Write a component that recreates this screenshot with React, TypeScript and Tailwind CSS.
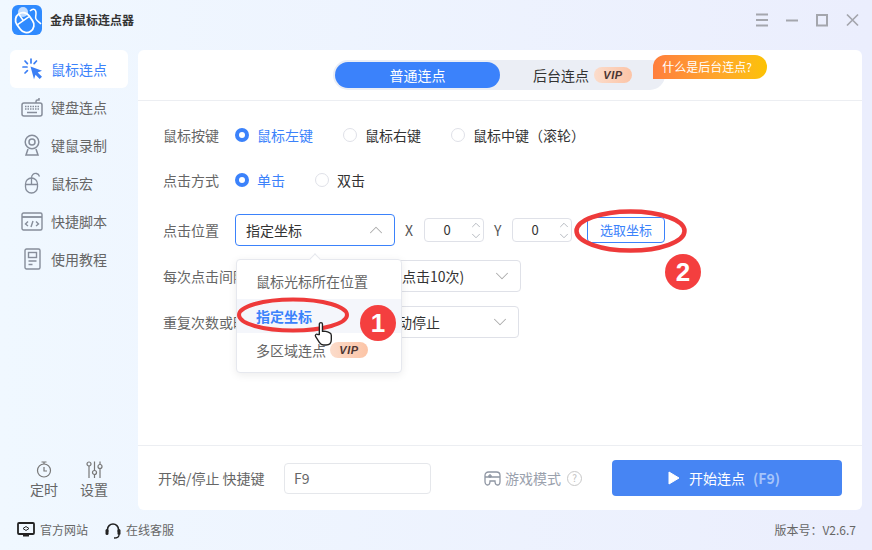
import { ChevronDown, ChevronUp } from "lucide-react";

const font = { fontFamily: '"Noto Sans CJK SC", "Noto Sans", sans-serif' };

const Logo = () => (
  <svg width="30" height="30" viewBox="0 0 30 30" fill="none">
    <defs>
      <linearGradient id="lg" x1="0" y1="0" x2="30" y2="30">
        <stop offset="0" stopColor="#2f8bff" />
        <stop offset="1" stopColor="#2f6ff0" />
      </linearGradient>
    </defs>
    <rect width="30" height="30" rx="6" fill="url(#lg)" />
    <g transform="rotate(-35 13 18)">
      <rect x="5.500" y="7" width="15" height="21" rx="7.500" stroke="#fff" strokeWidth="1.800" />
      <path d="M6 15h14M13 7v8" stroke="#fff" strokeWidth="1.500" />
    </g>
    <path d="M18 6c3-3 6-2 6 2s-1 4 0 6 3 3 5 5" stroke="#fff" strokeWidth="1.500" />
    <circle cx="11" cy="7" r="5" fill="#fff" opacity="0.7" />
  </svg>
);

const ClickIcon = () => (
  <svg width="22" height="22" viewBox="0 0 22 22" fill="none">
    <path d="M9.500 8.500l11.500 4.300-4.300 1.800 4.300 4.200-2.300 2.300-4.200-4.300-1.500 4.500z" fill="#3b7ff5" />
    <path d="M10 1v4M2 9h4M4 3l2.400 2.600M15.500 3l-2.400 2.600M4 15l2.400-2.400" stroke="#3b7ff5" strokeWidth="1.700" strokeLinecap="round" />
  </svg>
);

const KeyboardIcon = () => (
  <svg width="22" height="20" viewBox="0 0 22 20" fill="none" stroke="#868d9a" strokeWidth="1.500">
    <rect x="1" y="6" width="20" height="13" rx="2" />
    <path d="M15 6V4.500c0-1 .5-1.500 1.500-1.500H18V1" />
    <path d="M4 9.500h14M4 12h14" strokeDasharray="1.500 1" />
    <path d="M6 15.500h10" />
  </svg>
);

const CameraIcon = () => (
  <svg width="18" height="22" viewBox="0 0 18 22" fill="none" stroke="#868d9a" strokeWidth="1.500">
    <circle cx="9" cy="8" r="6.800" />
    <circle cx="9" cy="8" r="3" />
    <path d="M5 15l-2 6h12l-2-6" />
  </svg>
);

const MouseIcon = () => (
  <svg width="17" height="22" viewBox="0 0 17 22" fill="none" stroke="#868d9a" strokeWidth="1.300">
    <rect x="1.500" y="6" width="12" height="15" rx="6" />
    <path d="M1.500 12.500h12M7.500 6v6.500M7.500 6c0-3 2-5 5-4.500 1.500.3 2.500 1.500 3 3" />
  </svg>
);

const ScriptIcon = () => (
  <svg width="22" height="19" viewBox="0 0 22 19" fill="none" stroke="#868d9a" strokeWidth="1.400">
    <rect x="1" y="1" width="20" height="17" rx="1.500" />
    <path d="M1 5h20" strokeWidth="1.800" />
    <path d="M7 9.500l-2.500 2.500L7 14M15 9.500l2.500 2.500L15 14M12 9l-2 6" />
  </svg>
);

const BookIcon = () => (
  <svg width="17" height="22" viewBox="0 0 17 22" fill="none" stroke="#868d9a" strokeWidth="1.400">
    <rect x="1" y="1" width="15" height="20" rx="1.500" />
    <rect x="4.500" y="4.500" width="8" height="5" />
    <path d="M4.500 13h8M4.500 16.500h4" />
  </svg>
);

const TimerIcon = () => (
  <svg width="16" height="17" viewBox="0 0 16 17" fill="none" stroke="#777" strokeWidth="1.200">
    <circle cx="8" cy="9.500" r="6.500" />
    <path d="M5.500 1h5M8 1v2M8 6v4h3" />
  </svg>
);

const SlidersIcon = () => (
  <svg width="17" height="17" viewBox="0 0 17 17" fill="none" stroke="#777" strokeWidth="1.200">
    <path d="M3 5v12M8.500 0.500v9M8.500 13.500V17M14 0.500V3.500M14 7.500V17" />
    <circle cx="3" cy="3" r="2" />
    <circle cx="8.500" cy="11.500" r="2" />
    <circle cx="14" cy="5.500" r="2" />
  </svg>
);

const MonitorIcon = () => (
  <svg width="18" height="16" viewBox="0 0 18 16" fill="none">
    <rect x="1" y="1" width="16" height="11" rx="1" stroke="#222" strokeWidth="1.800" />
    <path d="M6 13.500h6" stroke="#222" strokeWidth="2" />
    <path d="M6 6.500l3-2 3 2-3 2z" stroke="#222" strokeWidth="1" />
  </svg>
);

const HeadsetIcon = () => (
  <svg width="16" height="17" viewBox="0 0 16 17" fill="none">
    <path d="M2.500 10V7.500a5.500 5.500 0 0 1 11 0V10" stroke="#222" strokeWidth="1.600" />
    <rect x="0.500" y="7" width="3" height="6" rx="1.500" fill="#222" />
    <rect x="12.500" y="7" width="3" height="6" rx="1.500" fill="#222" />
    <path d="M14 13c0 2-2 3-5 3" stroke="#222" strokeWidth="1.300" />
  </svg>
);

const GamepadIcon = () => (
  <svg width="17" height="15" viewBox="0 0 17 15" fill="none" stroke="#8f96a3" strokeWidth="1.300">
    <path d="M4.500 1h8c2 0 3.500 1.500 3.500 3.500v6c0 2-1 3.500-2.500 3.500S11 12.500 11 10H6c0 2.500-1 4-2.500 4S1 12.500 1 10.500v-6C1 2.500 2.500 1 4.500 1z" />
    <path d="M1 6h15M6 3v4M4.200 5h3.600" />
  </svg>
);

const WindowButtons = () => (
  <svg width="104" height="14" viewBox="0 0 104 14" fill="none" stroke="#a4a6ad" strokeWidth="2">
    <path d="M0 1.500h12M0 7h12M0 12.500h12" />
    <path d="M30 7.500h12" />
    <rect x="61" y="2" width="10" height="10.500" />
    <path d="M91 1.500l11 11M102 1.500l-11 11" strokeWidth="1.700" />
  </svg>
);

const Vip = () => (
  <span className="inline-flex h-4 w-[38px] items-center justify-center rounded-full bg-gradient-to-r from-[#fbdccb] to-[#fcc4a6] text-[11px] font-black italic leading-none tracking-wider text-[#4a3432]" style={{ fontFamily: '"Liberation Sans", sans-serif' }}>
    VIP
  </span>
);

const Radio = ({ on, label }: { on?: boolean; label: string }) => (
  <div className="flex items-center gap-2">
    {on ? (
      <span className="flex h-[14px] w-[14px] items-center justify-center rounded-full bg-[#3b82fb]">
        <span className="h-[6px] w-[6px] rounded-full bg-white" />
      </span>
    ) : (
      <span className="h-[14px] w-[14px] rounded-full border border-[#dfe1e8] bg-white" />
    )}
    <span className={on ? "text-[#3b82fb]" : "text-[#333]"}>{label}</span>
  </div>
);

const NumberBox = () => (
  <div className="flex h-6 w-[60px] items-center rounded border border-[#dfe1e8]">
    <span className="flex-1 text-center text-[13px] text-[#333]">0</span>
    <div className="flex flex-col text-[#9a9fa8]">
      <ChevronUp size={14} strokeWidth={1.200} />
      <ChevronDown size={14} strokeWidth={1.200} className="-mt-[3px]" />
    </div>
  </div>
);

const nav = [
  { label: "鼠标连点", icon: <ClickIcon />, active: true },
  { label: "键盘连点", icon: <KeyboardIcon /> },
  { label: "键鼠录制", icon: <CameraIcon /> },
  { label: "鼠标宏", icon: <MouseIcon /> },
  { label: "快捷脚本", icon: <ScriptIcon /> },
  { label: "使用教程", icon: <BookIcon /> },
];

export default function App() {
  return (
    <div className="flex h-[550px] w-[872px] flex-col overflow-hidden bg-gradient-to-r from-[#f0f8ff] to-[#ebeefd] text-sm text-[#666]" style={font}>
      <header className="flex h-[50px] shrink-0 pb-[10px]">
        <div className="flex items-center pl-3">
          <Logo />
          <span className="ml-2 text-xs font-bold text-[#333]">金舟鼠标连点器</span>
        </div>
        <div className="ml-auto flex items-center pr-3">
          <WindowButtons />
        </div>
      </header>

      <div className="flex min-h-0 flex-1">
        <aside className="flex w-[138px] shrink-0 flex-col px-[10px]">
          {nav.map((n) => (
            <div key={n.label} className={`flex h-[38px] items-center rounded-md ${n.active ? "bg-white text-[#3b82fb]" : ""}`}>
              <span className="flex w-[41px] justify-center pl-[4px] pr-px">{n.icon}</span>
              <span>{n.label}</span>
            </div>
          ))}
          <div className="mt-auto mb-[11px] flex gap-[22px] pl-5">
            <div className="flex flex-col items-center gap-[1px]">
              <TimerIcon />
              <span>定时</span>
            </div>
            <div className="flex flex-col items-center gap-[1px]">
              <SlidersIcon />
              <span>设置</span>
            </div>
          </div>
        </aside>

        <main className="mr-[10px] flex flex-1 flex-col rounded-md bg-white">
          <div className="relative flex h-[51px] shrink-0 justify-center border-b border-[#eceef2] pt-[10px] pr-[2px]">
            <div className="flex h-[30px] w-[332px] items-center rounded-full bg-[#ebeef5] pl-[2px]">
              <div className="flex h-[26px] w-[165px] items-center justify-center rounded-full bg-[#3b82fb] text-white">普通连点</div>
              <div className="flex flex-1 items-center gap-[5px] pl-[33px] text-[#333]">
                后台连点
                <Vip />
              </div>
            </div>
            <div className="absolute left-[515px] top-[5px] flex h-6 w-[114px] items-center justify-center rounded-t-full rounded-br-full bg-gradient-to-r from-[#ff7e3c] to-[#fcc200] pr-[6px] text-xs text-white">
              什么是后台连点?
            </div>
          </div>

          <div className="relative flex-1 px-[25px] pt-[18px]">
            <div className="flex h-8 items-center">
              <span className="w-[72px]">鼠标按键</span>
              <div className="flex gap-[30px]">
                <Radio on label="鼠标左键" />
                <Radio label="鼠标右键" />
                <Radio label="鼠标中键（滚轮）" />
              </div>
            </div>
            <div className="mt-[13px] flex h-8 items-center">
              <span className="w-[72px]">点击方式</span>
              <div className="flex gap-[30px]">
                <Radio on label="单击" />
                <Radio label="双击" />
              </div>
            </div>
            <div className="mt-[18px] flex h-8 items-center">
              <span className="w-[72px]">点击位置</span>
              <div className="flex h-8 w-[160px] items-center justify-between rounded border border-[#3b82fb] pl-[10px] pr-[7px] text-[#333]">
                指定坐标
                <ChevronUp size={22} strokeWidth={1.100} className="text-[#aaa]" />
              </div>
              <span className="ml-[10px] w-[19px] text-[#555]">X</span>
              <NumberBox />
              <span className="ml-[10px] w-[18px] text-[#555]">Y</span>
              <NumberBox />
              <button className="ml-[15px] flex h-[26px] w-[78px] items-center justify-center rounded border border-[#3b82fb] text-[13px] text-[#3b82fb]">选取坐标</button>
            </div>
            <div className="mt-[14px] flex h-8 items-center">
              <span className="w-[95px] shrink-0">每次点击间隔</span>
              <div className="flex h-8 w-[263px] items-center justify-between rounded border border-[#dfe1e8] pl-[59px] pr-[7px] text-[#333]">
                100毫秒(每秒点击10次)
                <ChevronDown size={22} strokeWidth={1.100} className="text-[#aaa]" />
              </div>
            </div>
            <div className="mt-[14px] flex h-8 items-center">
              <span className="w-[108px] shrink-0">重复次数或时长</span>
              <div className="flex h-8 w-[248px] items-center justify-between rounded border border-[#dfe1e8] pl-[112px] pr-[7px] text-[#333]">
                手动停止
                <ChevronDown size={22} strokeWidth={1.100} className="text-[#aaa]" />
              </div>
            </div>

            {/* dropdown */}
            <div className="absolute left-[98px] top-[158px] z-10 h-[114px] w-[166px] rounded border border-[#e6e8ee] bg-white shadow-[0_2px_8px_rgba(0,0,0,0.08)]">
              <span className="absolute -top-[5px] left-[74px] h-2 w-2 rotate-45 border-l border-t border-[#e6e8ee] bg-white" />
              <div className="flex h-[39px] items-end pb-[8px] pl-[19px] text-[#666]">鼠标光标所在位置</div>
              <div className="flex h-[34px] items-center bg-[#f4f6fb] pl-[19px] font-bold text-[#3b82fb]">指定坐标</div>
              <div className="flex h-[34px] items-center gap-[4px] pl-[19px] text-[#666]">
                多区域连点
                <Vip />
              </div>
            </div>

            {/* annotations */}
            <svg className="pointer-events-none absolute left-[99px] top-[196px] z-20" width="114" height="38" viewBox="0 0 114 38" fill="none">
              <ellipse cx="56" cy="18" rx="54" ry="15.500" stroke="#ee3a3a" strokeWidth="4" />
            </svg>
            <svg className="pointer-events-none absolute left-[436px] top-[108px] z-20" width="113" height="44" viewBox="0 0 113 44" fill="none">
              <ellipse cx="56.500" cy="22" rx="54" ry="19.500" stroke="#ee3a3a" strokeWidth="4.500" />
            </svg>
            <span className="absolute left-[222px] top-[204px] z-20 flex h-9 w-9 items-center justify-center rounded-full bg-[#f43f3f] text-[26px] font-bold leading-none text-white" style={{ fontFamily: '"Liberation Sans", sans-serif' }}>1</span>
            <span className="absolute left-[527px] top-[153px] z-20 flex h-9 w-9 items-center justify-center rounded-full bg-[#f43f3f] text-[26px] font-bold leading-none text-white" style={{ fontFamily: '"Liberation Sans", sans-serif' }}>2</span>
            <svg className="absolute left-[176px] top-[220px] z-20" width="19" height="25" viewBox="0 0 18 24" fill="#fff" stroke="#222" strokeWidth="1.300" strokeLinejoin="round">
              <path d="M5 13V3c0-2 3-2 3 0v7l1-.3 2 .3 2 .5 2 .8c1 .5 1.500 1.500 1.500 2.700V18c0 3-2 5-5 5H9c-2 0-3-1-4-2.500L1.500 15c-1-1.500.5-3 2-2z" />
            </svg>
          </div>

          <div className="flex h-[65px] shrink-0 items-center border-t border-[#eceef2] pl-5 pr-5">
            <span className="w-[126px]">开始/停止 快捷键</span>
            <div className="flex h-[31px] w-[147px] items-center rounded border border-[#e5e7eb] pl-[9px]">F9</div>
            <div className="ml-[53px] flex items-center gap-[4px] text-[#9aa1ad]">
              <GamepadIcon />
              游戏模式
              <span className="ml-[2px] flex h-[15px] w-[15px] items-center justify-center rounded-full border border-[#c8c8c8] text-[10px] text-[#c0c0c0]">?</span>
            </div>
            <button className="ml-auto flex h-9 w-[230px] items-center rounded bg-[#4785f3] pl-[56px] text-white">
              <svg width="12" height="14" viewBox="0 0 12 14" className="mr-[9px]" fill="#fff" stroke="#fff" strokeWidth="1" strokeLinejoin="round">
                <path d="M1 1l10 6-10 6z" />
              </svg>
              开始连点
              <span className="ml-2 font-bold text-[#a5c4fa]">(F9)</span>
            </button>
          </div>
        </main>
      </div>

      <footer className="flex h-10 shrink-0 items-center pl-[17px] pr-4 text-xs">
        <MonitorIcon />
        <span className="ml-[5px]">官方网站</span>
        <span className="ml-[17px]"><HeadsetIcon /></span>
        <span className="ml-[5px]">在线客服</span>
        <span className="ml-auto">版本号：V2.6.7</span>
      </footer>
    </div>
  );
}
